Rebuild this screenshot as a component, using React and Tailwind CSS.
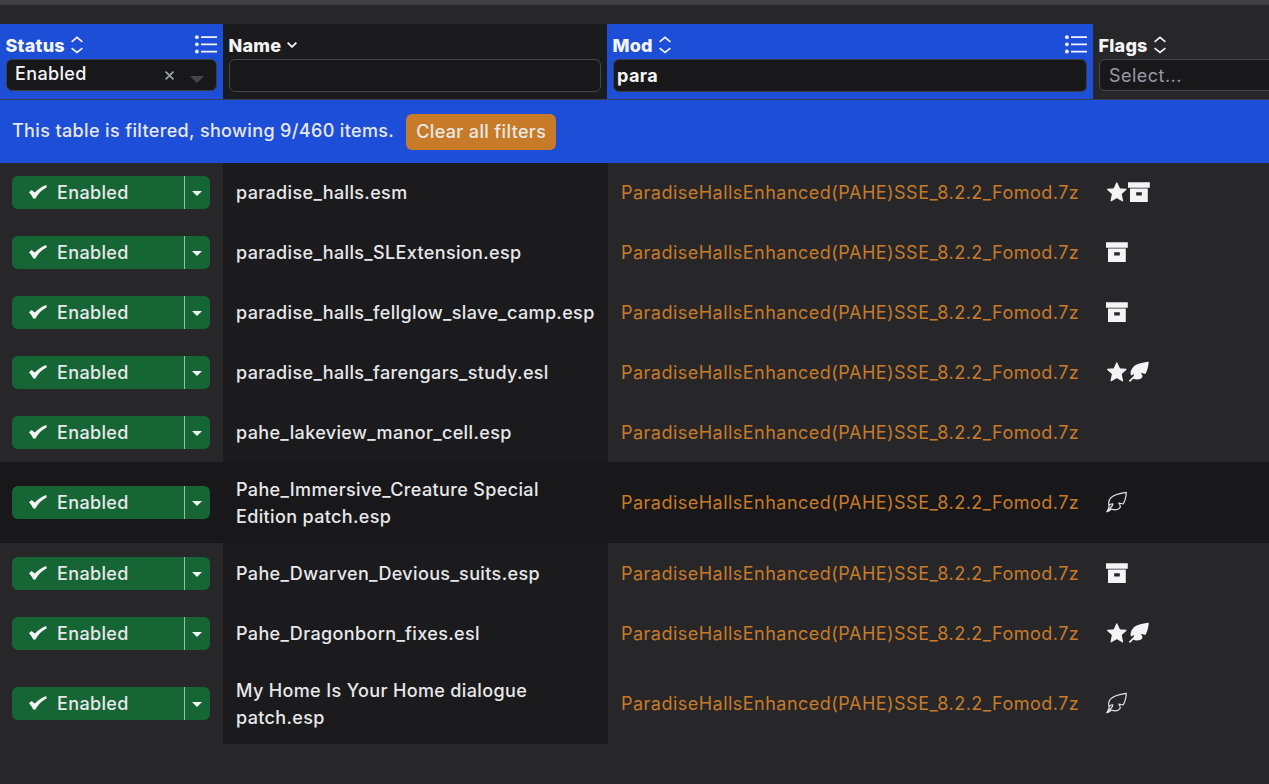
const MOD = 'ParadiseHallsEnhanced(PAHE)SSE_8.2.2_Fomod.7z';

const ROWS = [
  { name: 'paradise_halls.esm', flags: ['star', 'archive'] },
  { name: 'paradise_halls_SLExtension.esp', flags: ['archive'] },
  { name: 'paradise_halls_fellglow_slave_camp.esp', flags: ['archive'] },
  { name: 'paradise_halls_farengars_study.esl', flags: ['star', 'feather'] },
  { name: 'pahe_lakeview_manor_cell.esp', flags: [] },
  { name: 'Pahe_Immersive_Creature Special Edition patch.esp', flags: ['outline'], tall: true, active: true },
  { name: 'Pahe_Dwarven_Devious_suits.esp', flags: ['archive'] },
  { name: 'Pahe_Dragonborn_fixes.esl', flags: ['star', 'feather'] },
  { name: 'My Home Is Your Home dialogue patch.esp', flags: ['outline'], tall: true },
];

function Flag({ kind }) {
  return (
    <svg className="-mt-px block h-[22px] w-[22px] shrink-0" viewBox="0 0 22 22" fill="#f4f4f5">
      {kind === 'star' && (
        <path
          d="M10.8 1.9L13.5 7.8L20 8.4L15.1 12.8L16.5 19.8L10.8 16.5L5.1 19.8L6.5 12.8L1.6 8.4L8.1 7.8Z"
          stroke="#f4f4f5"
          strokeWidth="1.2"
          strokeLinejoin="round"
        />
      )}
      {kind === 'archive' && (
        <path fillRule="evenodd" d="M0 1.3H21.8V6.8H0ZM2 7.6H19.8V21H2ZM8.2 11.2V14.4H13.8V11.2Z" />
      )}
      {kind === 'feather' && (
        <path d="M20.8 .8C14 1.6 8 2.8 4.9 6.4C2.6 9 2.1 11.8 3 14.6L6.2 13L5.6 14.9L.8 19.8L2 20.9L5.2 17.8C8.4 19 12.6 18.8 14.4 16C14.6 14.5 13.8 13.2 12.6 11.8L17.4 13C19.3 9.8 20.5 5.2 20.8 .8Z" />
      )}
      {kind === 'outline' && (
        <g fill="none" stroke="#e4e4e7" strokeWidth="1.2" strokeLinejoin="round">
          <path d="M20.3 1.3C13 2.3 8 3.5 5 6.6C2.6 9 2.2 11.5 3 14.3L5.2 13L6.8 12.8L6.4 14.5L.9 20.8L3.4 19.8L5.2 18C8.5 19.2 12.4 18.9 14.2 16.4C14.7 14.5 13.8 13.4 12.8 12L17.1 13C19 10 20.1 5.5 20.3 1.3Z" />
          <path d="M3 14.3V16.4L.9 20.8" />
        </g>
      )}
    </svg>
  );
}

function SortIcon() {
  return (
    <svg className="-mt-[2px] ml-px h-[18px] w-3 shrink-0" viewBox="0 0 12 18" fill="none" stroke="#f4f4f5" strokeWidth="1.7">
      <path d="M.6 5.8L6 1.4L11.4 5.8M.6 12.2L6 16.4L11.4 12.2" />
    </svg>
  );
}

function ListIcon() {
  return (
    <svg className="-mt-[3px] block h-[19px] w-[22px] shrink-0" viewBox="0 0 22 19" fill="#f4f4f5">
      <circle cx="1.9" cy="2.2" r="1.9" />
      <circle cx="1.9" cy="9.3" r="1.9" />
      <circle cx="1.9" cy="16.5" r="1.9" />
      <path d="M6 1.3H22V3H6ZM6 8.5H22V10.2H6ZM6 15.7H22V17.4H6Z" />
    </svg>
  );
}

function Title({ children, icon, list }) {
  return (
    <div className="flex h-[27px] items-center">
      <span className="mr-[5px] -ml-[0.5px] font-extrabold tracking-[0.22px]">{children}</span>
      {icon}
      {list && (
        <span className="ml-auto">
          <ListIcon />
        </span>
      )}
    </div>
  );
}

function Header() {
  return (
    <div className="relative flex h-[75px] text-[#f4f4f5]">
      <div className="w-[223px] shrink-0 bg-[#1d4ed8] px-[6px] pt-[8px]">
        <Title icon={<SortIcon />} list>Status</Title>
        <div className="flex h-8 items-center rounded-md border border-[#3f3f46] bg-[#18181b] pr-3 pl-2">
          <span className="-mt-[3px]">Enabled</span>
          <svg className="mt-px ml-auto h-[9px] w-[9px]" viewBox="0 0 9 9" stroke="#a1a1aa" strokeWidth="1.7">
            <path d="M.6 .6L8.4 8.4M8.4 .6L.6 8.4" />
          </svg>
          <svg className="mt-[9px] ml-4 h-[7px] w-[14px]" viewBox="0 0 14 7" fill="#46464d">
            <path d="M0 0H14L7 7Z" />
          </svg>
        </div>
      </div>
      <div className="w-[384px] shrink-0 bg-[#1b1b1d] px-[6px] pt-[8px]">
        <Title
          icon={
            <svg className="-mt-px ml-px h-[6px] w-[10px]" viewBox="0 0 10 6" fill="none" stroke="#f4f4f5" strokeWidth="1.8">
              <path d="M.6 .6L5 4.9L9.4 .6" />
            </svg>
          }
        >
          Name
        </Title>
        <div className="h-[33px] rounded-md border border-[#46464c] bg-[#18181b]" />
      </div>
      <div className="w-[486px] shrink-0 bg-[#1d4ed8] px-[6px] pt-[8px]">
        <Title icon={<SortIcon />} list>Mod</Title>
        <div className="flex h-[33px] items-center rounded-md border border-[#3f3f46] bg-[#18181b] px-[3px] font-bold">
          para
        </div>
      </div>
      <div className="w-[240px] shrink-0 bg-[#27272a] px-[6px] pt-[8px]">
        <Title icon={<SortIcon />}>Flags</Title>
        <div className="flex h-8 items-center rounded-md border border-[#46464c] bg-[#18181b] px-[9px] font-normal tracking-[0.48px] text-[#9a9aa3]">
          Select...
        </div>
      </div>
    </div>
  );
}

function StatusButton() {
  return (
    <div className="flex h-[33px] w-[198px] overflow-hidden rounded-md bg-[#166534]">
      <div className="flex flex-1 items-center pl-[17px]">
        <svg className="mr-[10px] -mt-px h-[14px] w-[18px]" viewBox="0 0 18 14" fill="#f4f4f5">
          <path d="M0 7.2L2.5 5L5.8 7.6C9.5 4 13 1.4 17.2 0L17.8 2.2C12.8 4.8 9 8.6 6.2 13.8L4.3 13.6C3.3 11.2 1.8 9 0 7.2Z" />
        </svg>
        Enabled
      </div>
      <div className="flex w-[26px] items-center border-l border-[#9ebca9] pl-[7px]">
        <svg className="mt-[2px] h-[5px] w-[10px]" viewBox="0 0 10 5" fill="#f4f4f5">
          <path d="M0 0H10L5 5Z" />
        </svg>
      </div>
    </div>
  );
}

function Row({ row }) {
  const height = row.tall ? 'h-[81px]' : 'h-[60px] pt-px';
  return (
    <div className={row.active ? 'flex bg-[#18181b]' : 'flex'}>
      <div className={`flex w-[223px] shrink-0 items-center pl-3 ${height}`}>
        <StatusButton />
      </div>
      <div
        className={`flex w-[385px] shrink-0 items-center pr-3 pl-[13px] ${height} ${row.active ? 'bg-[#18181b]' : 'bg-[#1b1b1d]'}`}
      >
        {row.name}
      </div>
      <div
        className={`flex w-[485px] shrink-0 items-center pl-[13px] font-normal tracking-[0.48px] text-[#c77b29] ${height}`}
      >
        {MOD}
      </div>
      <div className={`flex shrink-0 items-center pl-[13px] ${height}`}>
        {row.flags.map((kind) => (
          <Flag key={kind} kind={kind} />
        ))}
      </div>
    </div>
  );
}

export default function App() {
  return (
    <div className="h-[784px] w-[1269px] overflow-hidden bg-[#27272a] font-['Inter',sans-serif] text-[18px] leading-[27px] font-medium tracking-[0.36px] text-[#e8e8ea]">
      <div className="h-[5px] bg-[#3f3f46]" />
      <div className="h-[19px]" />
      <Header />
      <div className="relative -mb-px flex h-16 items-center border-t border-[#3a3f55] bg-[#1d4ed8] pl-3">
        <span className="mr-3 -mt-[2px]">This table is filtered, showing 9/460 items.</span>
        <button className="h-9 rounded-md bg-[#c77b29] px-[10px]">Clear all filters</button>
      </div>
      {ROWS.map((row) => (
        <Row key={row.name} row={row} />
      ))}
    </div>
  );
}
